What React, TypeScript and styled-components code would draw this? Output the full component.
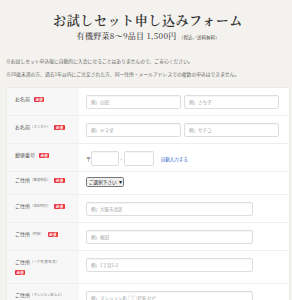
import React from "react";
import styled, { createGlobalStyle } from "styled-components";

const GlobalStyle = createGlobalStyle`
  html, body { margin: 0; padding: 0; background: #f4f2ee; }
  body { font-family: "Noto Sans CJK JP", "Noto Sans", sans-serif; color: #444; }
  * { box-sizing: border-box; }
`;

interface Field {
  label: string;
  sub?: string;
  required?: boolean;
  badgeBelow?: boolean;
  kind: "name" | "postal" | "select" | "text";
  placeholders?: string[];
}

const fields: Field[] = [
  { label: "お名前", required: true, kind: "name", placeholders: ["例）山田", "例）さち子"] },
  { label: "お名前", sub: "（フリガナ）", required: true, kind: "name", placeholders: ["例）ヤマダ", "例）サチコ"] },
  { label: "郵便番号", required: true, kind: "postal" },
  { label: "ご住所", sub: "（都道府県）", required: true, kind: "select" },
  { label: "ご住所", sub: "（市区町村）", required: true, kind: "text", placeholders: ["例）大阪市北区"] },
  { label: "ご住所", sub: "（町域）", required: true, kind: "text", placeholders: ["例）梅田"] },
  { label: "ご住所", sub: "（ー丁目,番地,号）", required: true, badgeBelow: true, kind: "text", placeholders: ["例）1丁目1-2"] },
  { label: "ご住所", sub: "（マンション名など）", kind: "text", placeholders: ["例）マンション名 ○○号室 など"] },
];

const App: React.FC = () => {
  const renderControl = (f: Field) => {
    if (f.kind === "name") {
      return (
        <NameInputs>
          {f.placeholders!.map((p) => (
            <Input key={p} placeholder={p} />
          ))}
        </NameInputs>
      );
    }
    if (f.kind === "postal") {
      return (
        <PostalWrap>
          <Mark>〒</Mark>
          <Input $w={28} $h={15} />
          <Mark $pad>-</Mark>
          <Input $w={30} $h={15} />
          <AutoLink href="#">自動入力する</AutoLink>
        </PostalWrap>
      );
    }
    if (f.kind === "select") {
      return (
        <SelectWrap>
          <Select defaultValue="">
            <option value="">ご選択下さい</option>
          </Select>
          <Caret>▾</Caret>
        </SelectWrap>
      );
    }
    return <Input $w={167} placeholder={f.placeholders![0]} />;
  };

  return (
    <Page>
      <GlobalStyle />
      <Title>お試しセット申し込みフォーム</Title>
      <Subtitle>
        有機野菜8～9品目 1,500円 <small>（税込／送料無料）</small>
      </Subtitle>
      <Notes>
        <Note>※お試しセット申込後に自動的に入会になることはありませんので、ご安心ください。</Note>
        <Note>※20歳未満の方、過去1年以内にご注文された方、同一住所・メールアドレスでの複数の申込はできません。</Note>
      </Notes>
      <Card>
        {fields.map((f, i) => (
          <Row key={i} $h={f.kind === "select" ? 23 : f.badgeBelow ? 33 : 28}>
            <LabelCell $top={f.kind === "select" ? 5 : 8}>
              <LabelLine>
                {f.label}
                {f.sub && <Sub>{f.sub}</Sub>}
                {f.required && !f.badgeBelow && <Badge>必須</Badge>}
              </LabelLine>
              {f.required && f.badgeBelow && (
                <LabelLine>
                  <Badge $below>必須</Badge>
                </LabelLine>
              )}
            </LabelCell>
            <FieldCell $top={f.kind === "select" ? 5 : 7}>{renderControl(f)}</FieldCell>
          </Row>
        ))}
      </Card>
    </Page>
  );
};

const Page = styled.div`
  padding: 12px 2px 0 6px;
  height: 300px;
  overflow: hidden;
`;

const Title = styled.h1`
  margin: 0;
  height: 16px;
  text-align: center;
  font-family: "Noto Serif CJK JP", "Noto Sans CJK JP", serif;
  font-size: 13px;
  line-height: 16px;
  font-weight: 600;
  letter-spacing: 0.6px;
  color: #333;
`;

const Subtitle = styled.p`
  margin: 2px 0 0;
  height: 12px;
  text-align: center;
  font-family: "Noto Serif CJK JP", "Noto Sans CJK JP", serif;
  font-size: 8px;
  line-height: 12px;
  font-weight: 500;
  letter-spacing: 0.3px;
  color: #444;

  small {
    font-size: 4.5px;
    letter-spacing: 0;
  }
`;

const Notes = styled.div`
  margin-top: 16px;
  height: 20px;
  display: flex;
  flex-direction: column;
  gap: 7px;
`;

const Note = styled.p`
  margin: 0;
  height: 6px;
  font-size: 4.8px;
  line-height: 6px;
  color: #666;
  white-space: nowrap;
`;

const Card = styled.div`
  margin-top: 9px;
  background: #fff;
  border: 1px solid #ebebeb;
`;

const Row = styled.div<{ $h: number }>`
  display: grid;
  grid-template-columns: 72px 1fr;
  border-bottom: 1px solid #eee;
  height: ${(p) => p.$h}px;
`;

const LabelCell = styled.div<{ $top: number }>`
  background: #f7f7f7;
  padding: ${(p) => p.$top}px 0 0 8px;
  display: flex;
  flex-direction: column;
  gap: 4px;
`;

const LabelLine = styled.div`
  display: flex;
  align-items: center;
  height: 6px;
  font-size: 5px;
  line-height: 6px;
  color: #555;
  white-space: nowrap;
`;

const Sub = styled.span`
  font-size: 3.4px;
  color: #777;
`;

const Badge = styled.span<{ $below?: boolean }>`
  margin-left: ${(p) => (p.$below ? "0" : "4px")};
  background: #e8323c;
  color: #fff;
  font-size: 3.6px;
  line-height: 5px;
  padding: 0 1.5px;
  border-radius: 1px;
  font-weight: 700;
`;

const FieldCell = styled.div<{ $top: number }>`
  padding: ${(p) => p.$top}px 0 0 7px;
`;

const NameInputs = styled.div`
  display: flex;
  gap: 3px;
`;

const Input = styled.input<{ $w?: number; $h?: number }>`
  display: block;
  width: ${(p) => (p.$w ? `${p.$w}px` : "95px")};
  height: ${(p) => (p.$h ? `${p.$h}px` : "14px")};
  border: 1px solid #ddd;
  border-radius: 2px;
  background: #fff;
  box-shadow: inset 0 1px 1px rgba(0, 0, 0, 0.04);
  padding: 0 4px;
  font-family: "Noto Sans CJK JP", sans-serif;
  font-size: 4.5px;
  outline: none;

  &::placeholder {
    color: #999;
  }
`;

const PostalWrap = styled.div`
  display: flex;
  align-items: center;
`;

const Mark = styled.span<{ $pad?: boolean }>`
  font-size: 5px;
  color: #555;
  padding: ${(p) => (p.$pad ? "0 1.5px" : "0")};
`;

const AutoLink = styled.a`
  margin-left: 7px;
  font-size: 4.5px;
  color: #3366cc;
  text-decoration: none;
`;

const SelectWrap = styled.div`
  position: relative;
  width: 38px;
  height: 10px;
`;

const Select = styled.select`
  appearance: none;
  -webkit-appearance: none;
  display: block;
  width: 38px;
  height: 10px;
  margin: 0;
  font-family: "Noto Sans CJK JP", sans-serif;
  font-size: 4.6px;
  line-height: 8px;
  padding: 0 0 0 2px;
  border: 1px solid #777;
  border-radius: 1.5px;
  background: #efefef;
  color: #222;
  outline: none;
`;

const Caret = styled.span`
  position: absolute;
  right: 2px;
  top: 0;
  font-size: 6px;
  line-height: 10px;
  color: #222;
  pointer-events: none;
`;

export default App;
